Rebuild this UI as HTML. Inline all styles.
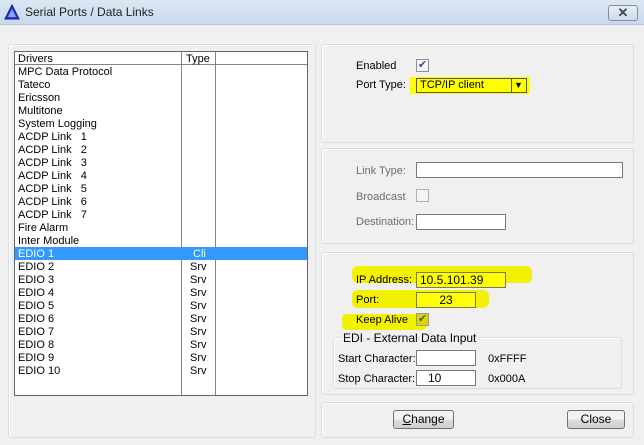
<!DOCTYPE html><html><head><style>
*{margin:0;padding:0;box-sizing:border-box}
body{width:644px;height:445px;background:#f0f0f0;font-family:"Liberation Sans",sans-serif;font-size:11px;position:relative;overflow:hidden;color:#000}
.a{position:absolute}
.title{left:0;top:0;width:644px;height:25px;background:linear-gradient(#dce7f4,#c9d9ec);border-bottom:1px solid #b8c8dc}
.grp{border:1px solid #d5dfe5;border-radius:3px;box-shadow:inset 1px 1px 0 #fff}
.inp{background:#fff;border:1px solid #7a7a7a}
.cb{width:13px;height:13px;border:1px solid #8f8f8f;background:#f4f4f4}
.g{color:#6d6d6d}
.row{position:absolute;left:0;height:13px;line-height:14px;width:292px}
.row span{position:absolute}
.btn{border:1px solid #707070;border-radius:3px;background:linear-gradient(#f2f2f2 50%,#dddddd 50%,#cfcfcf);text-align:center;line-height:16px;font-size:12px}
</style></head><body>
<div class="a title">
<svg class="a" style="left:4px;top:4px" width="16" height="16"><polygon points="8,1 15,15 1,15" fill="#2a3fd0" stroke="#0a1a80"/><polygon points="8,5 12,13 4,13" fill="#8aa6ff"/></svg>
<div class="a" style="left:25px;top:5px;font-size:12px;color:#222">Serial Ports / Data Links</div>
<div class="a" style="left:608px;top:5px;width:30px;height:16px;border:1px solid #7d8ea6;border-radius:3px;background:linear-gradient(#e8eef6,#cfdbea);text-align:center;line-height:13px;font-size:13px;color:#444;font-weight:bold">✕</div>
</div>
<div class="a grp" style="left:8px;top:44px;width:308px;height:394px"></div>
<div class="a" style="left:14px;top:51px;width:294px;height:345px;background:#fff;border:1px solid #646464">
<div class="a" style="left:166px;top:0;width:1px;height:343px;background:#828282"></div>
<div class="a" style="left:200px;top:0;width:1px;height:343px;background:#828282"></div>
<div class="a" style="left:0;top:12px;width:292px;height:1px;background:#828282"></div>
<div class="row" style="top:0"><span style="left:3px">Drivers</span><span style="left:171px">Type</span></div>
<div class="row" style="top:13px"><span style="left:3px">MPC Data Protocol</span></div>
<div class="row" style="top:26px"><span style="left:3px">Tateco</span></div>
<div class="row" style="top:39px"><span style="left:3px">Ericsson</span></div>
<div class="row" style="top:52px"><span style="left:3px">Multitone</span></div>
<div class="row" style="top:65px"><span style="left:3px">System Logging</span></div>
<div class="row" style="top:78px"><span style="left:3px">ACDP Link &nbsp; 1</span></div>
<div class="row" style="top:91px"><span style="left:3px">ACDP Link &nbsp; 2</span></div>
<div class="row" style="top:104px"><span style="left:3px">ACDP Link &nbsp; 3</span></div>
<div class="row" style="top:117px"><span style="left:3px">ACDP Link &nbsp; 4</span></div>
<div class="row" style="top:130px"><span style="left:3px">ACDP Link &nbsp; 5</span></div>
<div class="row" style="top:143px"><span style="left:3px">ACDP Link &nbsp; 6</span></div>
<div class="row" style="top:156px"><span style="left:3px">ACDP Link &nbsp; 7</span></div>
<div class="row" style="top:169px"><span style="left:3px">Fire Alarm</span></div>
<div class="row" style="top:182px"><span style="left:3px">Inter Module</span></div>
<div class="row" style="top:195px;background:#3399ff;color:#fff"><span style="left:3px">EDIO 1</span><span style="left:178px">Cli</span></div>
<div class="row" style="top:208px"><span style="left:3px">EDIO 2</span><span style="left:175px">Srv</span></div>
<div class="row" style="top:221px"><span style="left:3px">EDIO 3</span><span style="left:175px">Srv</span></div>
<div class="row" style="top:234px"><span style="left:3px">EDIO 4</span><span style="left:175px">Srv</span></div>
<div class="row" style="top:247px"><span style="left:3px">EDIO 5</span><span style="left:175px">Srv</span></div>
<div class="row" style="top:260px"><span style="left:3px">EDIO 6</span><span style="left:175px">Srv</span></div>
<div class="row" style="top:273px"><span style="left:3px">EDIO 7</span><span style="left:175px">Srv</span></div>
<div class="row" style="top:286px"><span style="left:3px">EDIO 8</span><span style="left:175px">Srv</span></div>
<div class="row" style="top:299px"><span style="left:3px">EDIO 9</span><span style="left:175px">Srv</span></div>
<div class="row" style="top:312px"><span style="left:3px">EDIO 10</span><span style="left:175px">Srv</span></div>
</div>

<div class="a grp" style="left:321px;top:44px;width:313px;height:99px"></div>
<div class="a" style="left:356px;top:60px">Enabled</div>
<div class="a cb" style="left:416px;top:59px;color:#3a4fa0;font-size:11px;line-height:11px;text-align:center">✔</div>
<div class="a" style="left:356px;top:79px">Port Type:</div>
<div class="a" style="left:410px;top:77px;width:120px;height:17px;background:#ffff00"></div>
<div class="a" style="left:416px;top:78px;width:111px;height:15px;border:1px solid #555;line-height:13px;padding-left:3px">TCP/IP client</div>
<div class="a" style="left:511px;top:78px;width:1px;height:15px;background:#555"></div>
<div class="a" style="left:514px;top:78px;font-size:9px;line-height:15px">▼</div>

<div class="a grp" style="left:321px;top:148px;width:313px;height:96px"></div>
<div class="a g" style="left:356px;top:165px">Link Type:</div>
<div class="a inp" style="left:416px;top:162px;width:207px;height:16px"></div>
<div class="a g" style="left:356px;top:191px">Broadcast</div>
<div class="a cb" style="left:416px;top:189px;border-color:#b0b0b0"></div>
<div class="a g" style="left:356px;top:216px">Destination:</div>
<div class="a inp" style="left:416px;top:214px;width:90px;height:16px"></div>

<div class="a grp" style="left:321px;top:252px;width:313px;height:143px"></div>
<div class="a" style="left:352px;top:266px;width:180px;height:17px;background:#f2f200;border-radius:6px"></div>
<div class="a" style="left:352px;top:290px;width:137px;height:18px;background:#f2f200;border-radius:6px"></div>
<div class="a" style="left:342px;top:314px;width:84px;height:16px;background:#f2f200;border-radius:4px"></div>
<div class="a" style="left:356px;top:274px">IP Address:</div>
<div class="a" style="left:416px;top:272px;width:90px;height:16px;border:1px solid #777;background:#ffff00;line-height:15px;padding-left:3px;font-size:12px">10.5.101.39</div>
<div class="a" style="left:356px;top:294px">Port:</div>
<div class="a" style="left:416px;top:292px;width:60px;height:16px;border:1px solid #777;background:#ffff00;line-height:15px;text-align:center;font-size:12px">23</div>
<div class="a" style="left:356px;top:314px">Keep Alive</div>
<div class="a cb" style="left:416px;top:313px;background:#d8d800;border-color:#999;color:#556;font-size:11px;line-height:11px;text-align:center">✔</div>
<div class="a grp" style="left:333px;top:337px;width:289px;height:52px"></div>
<div class="a" style="left:341px;top:331px;background:#f0f0f0;padding:0 2px;font-size:12px">EDI - External Data Input</div>
<div class="a" style="left:338px;top:353px">Start Character:</div>
<div class="a inp" style="left:416px;top:350px;width:60px;height:16px"></div>
<div class="a" style="left:488px;top:353px">0xFFFF</div>
<div class="a" style="left:338px;top:373px">Stop Character:</div>
<div class="a inp" style="left:416px;top:370px;width:60px;height:16px;padding-left:11px;line-height:15px;font-size:12px">10</div>
<div class="a" style="left:488px;top:373px">0x000A</div>

<div class="a grp" style="left:321px;top:402px;width:313px;height:36px"></div>
<div class="a btn" style="left:393px;top:410px;width:61px;height:19px"><u>C</u>hange</div>
<div class="a btn" style="left:567px;top:410px;width:58px;height:19px">Close</div>
</body></html>
